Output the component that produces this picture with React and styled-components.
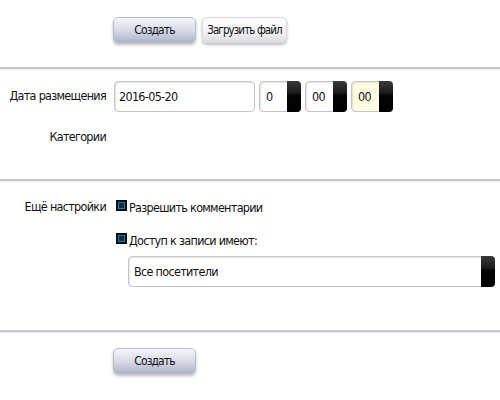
import React from 'react';
import styled, { createGlobalStyle } from 'styled-components';

const GlobalStyle = createGlobalStyle`
  body {
    margin: 0;
    background: #fff;
    font-family: "DejaVu Sans Condensed", "Liberation Sans", sans-serif;
    font-size: 12.5px;
    letter-spacing: -0.7px;
    color: #111;
  }
`;

export default function App() {
  return (
    <Page>
      <GlobalStyle />
      <Actions>
        <Button>Создать</Button>
        <Button light>Загрузить файл</Button>
      </Actions>

      <Divider />

      <Section>
        <Row>
          <Label>Дата размещения</Label>
          <Field>
            <TextInput>2016-05-20</TextInput>
            <TimeSelect>0</TimeSelect>
            <TimeSelect>00</TimeSelect>
            <TimeSelect active>00</TimeSelect>
          </Field>
        </Row>
        <Row>
          <Label>Категории</Label>
        </Row>
      </Section>

      <Divider />

      <Section settings>
        <Row>
          <Label>Ещё настройки</Label>
          <Stack>
            <Check>
              <Box />
              Разрешить комментарии
            </Check>
            <Check>
              <Box />
              Доступ к записи имеют:
            </Check>
            <Select>Все посетители</Select>
          </Stack>
        </Row>
      </Section>

      <Divider />

      <Actions bottom>
        <Button>Создать</Button>
      </Actions>
    </Page>
  );
}

const Page = styled.div`
  width: 500px;
  height: 400px;
  overflow: hidden;
`;

const Actions = styled.div`
  display: flex;
  gap: 6px;
  padding: ${(p) => (p.bottom ? '15px 0 0 113px' : '17px 0 0 113px')};
  height: ${(p) => (p.bottom ? 'auto' : '67px')};
  box-sizing: border-box;
`;

const Button = styled.button`
  box-sizing: border-box;
  height: 26px;
  width: ${(p) => (p.light ? '85px' : '83px')};
  padding: 0;
  border: 1px solid ${(p) => (p.light ? '#d8d8dc' : '#b9bccb')};
  border-radius: 5px;
  background: ${(p) =>
    p.light
      ? 'linear-gradient(#ffffff, #f2f2f4 60%, #dcdce0)'
      : 'linear-gradient(#f4f5fa, #d9dce8 50%, #aeb4c9)'};
  box-shadow: 0 2px 3px rgba(60, 60, 80, 0.35);
  font-family: inherit;
  font-size: ${(p) => (p.light ? '11.5px' : '12px')};
  letter-spacing: -0.9px;
  color: #111;
  white-space: nowrap;
`;

const Divider = styled.div`
  height: 2px;
  background: #c9c7d6;
  border-bottom: 1px solid #ecebf2;
`;

const Section = styled.div`
  display: flex;
  flex-direction: column;
  gap: 10px;
  padding: ${(p) => (p.settings ? '10px 0 43px' : '11px 0 27px')};
`;

const Row = styled.div`
  display: grid;
  grid-template-columns: 106px 1fr;
  column-gap: 8px;
  align-items: start;
`;

const Label = styled.div`
  text-align: right;
  line-height: 30px;
  white-space: nowrap;
`;

const Field = styled.div`
  display: flex;
  gap: 4px;
`;

const TextInput = styled.div`
  box-sizing: border-box;
  width: 141px;
  height: 31px;
  padding: 0 4px;
  line-height: 29px;
  border: 1px solid #c4c4c4;
  border-radius: 4px;
  box-shadow: inset 1px 1px 2px rgba(0, 0, 0, 0.12);
  background: #fff;
`;

const TimeSelect = styled.div`
  box-sizing: border-box;
  position: relative;
  width: 42px;
  height: 31px;
  padding: 0 6px;
  line-height: 29px;
  border: 1px solid #c4c4c4;
  border-radius: 4px;
  background: ${(p) => (p.active ? '#fefde3' : '#fff')};
  box-shadow: inset 1px 1px 2px rgba(0, 0, 0, 0.12);

  &::after {
    content: '';
    position: absolute;
    top: -1px;
    right: -1px;
    bottom: -1px;
    width: 14px;
    border-radius: 0 4px 4px 0;
    background: linear-gradient(#3a3a3a, #1a1a1a 40%, #050505 45%, #000);
  }
`;

const Stack = styled.div`
  display: flex;
  flex-direction: column;
  align-items: flex-start;
`;

const Check = styled.div`
  display: flex;
  align-items: center;
  gap: 2px;
  height: 30px;
  margin-bottom: 3px;
  margin-left: 2px;
`;

const Box = styled.span`
  box-sizing: border-box;
  width: 11px;
  height: 11px;
  border: 2px solid #0b0b0b;
  background: #1c7fb4;
  box-shadow: inset 0 0 0 1px #1c7fb4, inset 0 0 0 4px #0a2a40;
  margin-top: -4px;
`;

const Select = styled.div`
  box-sizing: border-box;
  position: relative;
  width: 367px;
  height: 31px;
  margin-left: 14px;
  margin-top: -2px;
  padding: 0 5px;
  line-height: 29px;
  border: 1px solid #c4c4c4;
  border-radius: 4px;
  background: #fff;
  box-shadow: inset 1px 1px 2px rgba(0, 0, 0, 0.1);

  &::after {
    content: '';
    position: absolute;
    top: -1px;
    right: -1px;
    bottom: -1px;
    width: 14px;
    border-radius: 0 4px 4px 0;
    background: linear-gradient(#3a3a3a, #1a1a1a 40%, #050505 45%, #000);
  }
`;
